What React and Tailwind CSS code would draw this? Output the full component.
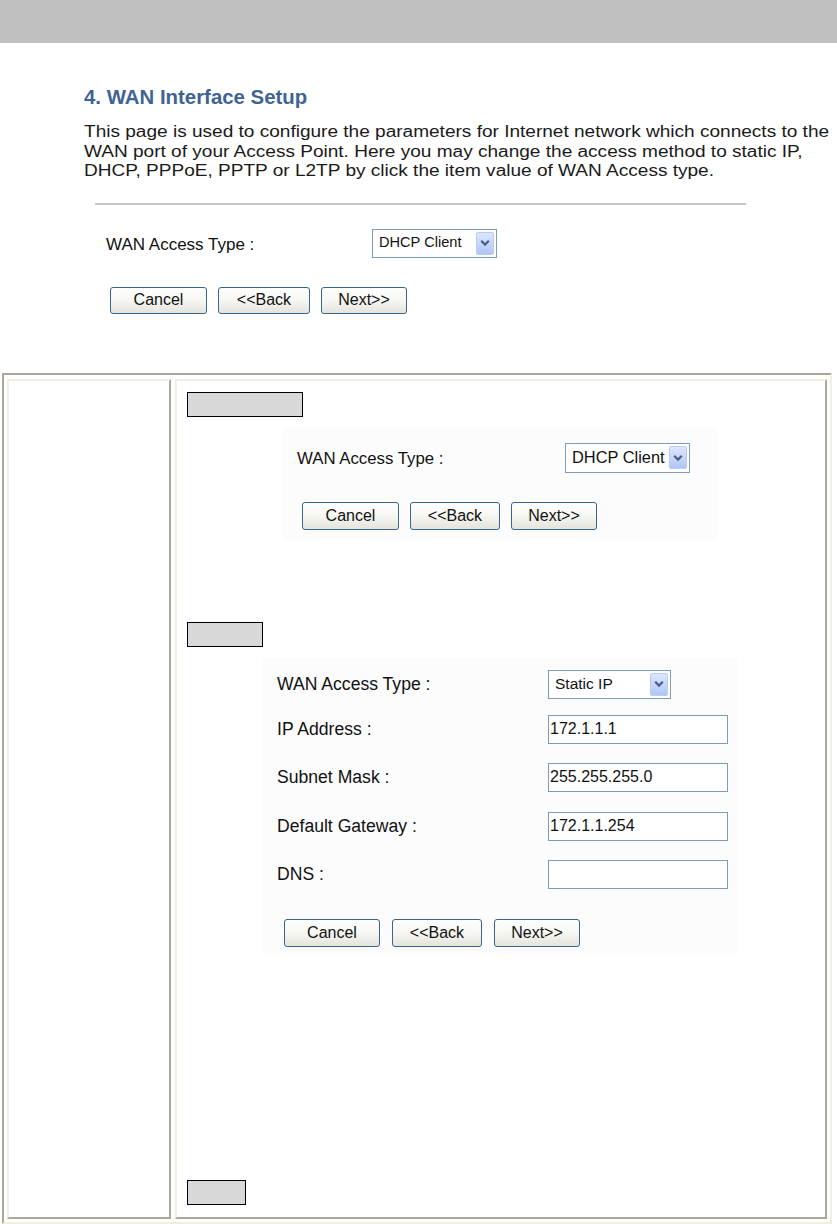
import React from "react";

function Arrow() {
  return (
    <div className="flex h-[23px] w-[18px] shrink-0 items-center justify-center rounded-[2px] border border-[#b8ccf5] bg-gradient-to-b from-[#dce7fe] to-[#b0c6f4]">
      <svg width="10" height="8" viewBox="0 0 10 8">
        <path d="M1.2 1.8 L5 5.6 L8.8 1.8" fill="none" stroke="#4a5e88" strokeWidth="2.2" />
      </svg>
    </div>
  );
}

function Select({ text, className, textClass }) {
  return (
    <div className={"flex items-center justify-between border border-[#7f9db9] bg-white pl-[6px] pr-[2px] " + className}>
      <span className={"whitespace-nowrap text-[#111] " + textClass}>{text}</span>
      <Arrow />
    </div>
  );
}

function Input({ value }) {
  return (
    <div className="flex h-[29px] w-[180px] items-center border border-[#7f9db9] bg-white pl-[1px] text-[16px] text-[#111]">
      {value}
    </div>
  );
}

function Btn({ children, className }) {
  return (
    <button
      type="button"
      className={
        "flex items-center justify-center rounded-[3px] border border-[#3b6591] bg-gradient-to-b from-white via-[#f6f6f2] to-[#e4e3dc] text-[16px] leading-none text-[#111] " +
        className
      }
    >
      {children}
    </button>
  );
}

function Row({ label, children }) {
  return (
    <div className="flex h-[29px] items-center">
      <span className="w-[285px] whitespace-nowrap pl-[14px] text-[17.6px] text-[#111]">{label}</span>
      {children}
    </div>
  );
}

export default function App() {
  return (
    <div className="min-h-[1224px] overflow-hidden bg-white font-['Liberation_Sans',Arial,sans-serif] text-[#111]">
      <div className="h-[43px] bg-[#c0c0c0]" />

      <h1 className="ml-[84px] mt-[42px] text-[20.4px] font-bold leading-[24px] text-[#3f6394]">
        4. WAN Interface Setup
      </h1>
      <p className="ml-[84px] mt-[13px] origin-left scale-x-[1.19] whitespace-nowrap text-[16px] leading-[19.5px] text-[#1a1a1a]">
        This page is used to configure the parameters for Internet network which connects to the
        <br />
        WAN port of your Access Point. Here you may change the access method to static IP,
        <br />
        DHCP, PPPoE, PPTP or L2TP by click the item value of WAN Access type.
      </p>

      <div className="ml-[95px] mt-[22px] h-[2px] w-[651px] bg-[#c6c6c6]" />

      <div className="mt-[24px] flex items-center">
        <span className="ml-[106px] w-[266px] whitespace-nowrap pt-[3px] text-[17px]">WAN Access Type :</span>
        <Select text="DHCP Client" className="h-[29px] w-[125px]" textClass="text-[14.6px]" />
      </div>

      <div className="ml-[110px] mt-[29px] flex gap-[11px]">
        <Btn className="h-[27px] w-[97px]">Cancel</Btn>
        <Btn className="h-[27px] w-[92px]">&lt;&lt;Back</Btn>
        <Btn className="h-[27px] w-[86px]">Next&gt;&gt;</Btn>
      </div>

      <div className="ml-[2px] mt-[59px] flex h-[851px] w-[830px] gap-[4px] border-2 border-b-[#f1efe2] border-l-[#aca899] border-r-[#f1efe2] border-t-[#aca899] px-[3px] pb-[3px] pt-[4px]">
        <div className="w-[164px] border-2 border-b-[#aca899] border-l-[#f1efe2] border-r-[#aca899] border-t-[#f1efe2]" />

        <div className="flex-1 border-2 border-b-[#aca899] border-l-[#f1efe2] border-r-[#aca899] border-t-[#f1efe2] pl-[10px] pt-[11px]">
          <div className="h-[25px] w-[116px] border border-black bg-[#d8d8d8]" />

          <div className="ml-[95px] mt-[11px] h-[112px] w-[435px] bg-[#fcfcfc] pt-[15px]">
            <div className="flex h-[30px] items-center">
              <span className="w-[283px] whitespace-nowrap pl-[15px] pt-[3px] text-[16.8px]">WAN Access Type :</span>
              <Select text="DHCP Client" className="h-[30px] w-[125px]" textClass="text-[16.4px]" />
            </div>
            <div className="ml-[20px] mt-[29px] flex gap-[11px]">
              <Btn className="h-[28px] w-[97px]">Cancel</Btn>
              <Btn className="h-[28px] w-[90px]">&lt;&lt;Back</Btn>
              <Btn className="h-[28px] w-[86px]">Next&gt;&gt;</Btn>
            </div>
          </div>

          <div className="mt-[82px] h-[25px] w-[76px] border border-black bg-[#d8d8d8]" />

          <div className="ml-[76px] mt-[11px] h-[297px] w-[474px] bg-[#fcfcfc] pt-[12px]">
            <Row label="WAN Access Type :">
              <Select text="Static IP" className="h-[29px] w-[123px]" textClass="text-[15.5px]" />
            </Row>
            <div className="mt-[16px]">
              <Row label="IP Address :">
                <Input value="172.1.1.1" />
              </Row>
            </div>
            <div className="mt-[19px]">
              <Row label="Subnet Mask :">
                <Input value="255.255.255.0" />
              </Row>
            </div>
            <div className="mt-[20px]">
              <Row label="Default Gateway :">
                <Input value="172.1.1.254" />
              </Row>
            </div>
            <div className="mt-[19px]">
              <Row label="DNS :">
                <Input value="" />
              </Row>
            </div>
            <div className="ml-[21px] mt-[30px] flex gap-[12px]">
              <Btn className="h-[28px] w-[96px]">Cancel</Btn>
              <Btn className="h-[28px] w-[90px]">&lt;&lt;Back</Btn>
              <Btn className="h-[28px] w-[86px]">Next&gt;&gt;</Btn>
            </div>
          </div>

          <div className="mt-[225px] h-[25px] w-[59px] border border-black bg-[#d8d8d8]" />
        </div>
      </div>
    </div>
  );
}
